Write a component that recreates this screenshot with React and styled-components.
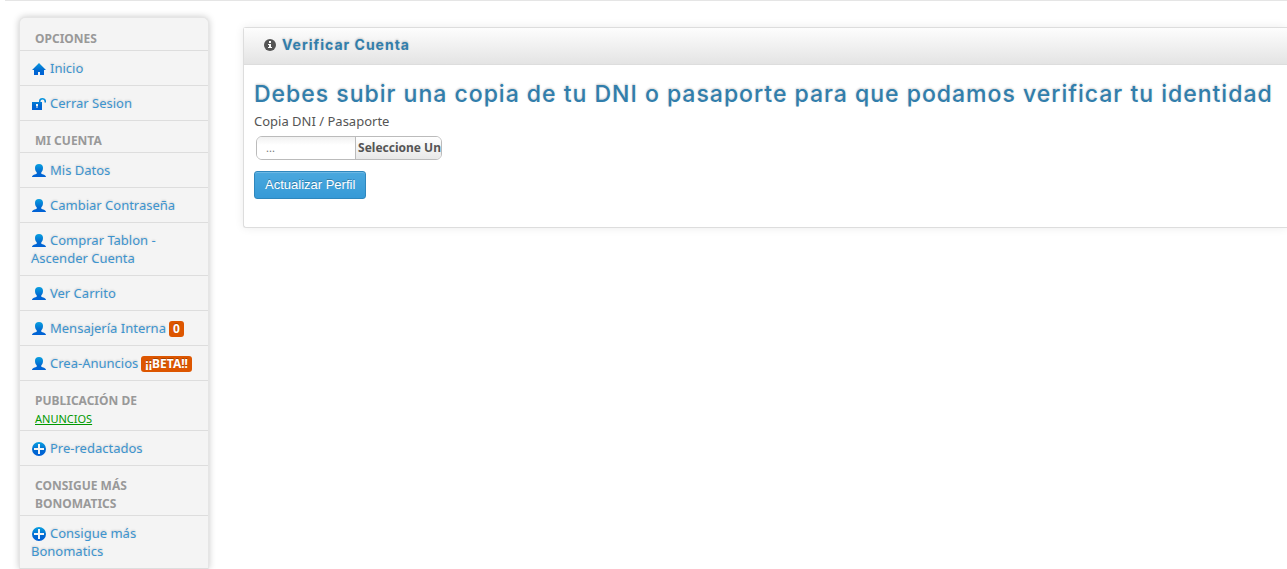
import React from "react";
import styled, { createGlobalStyle } from "styled-components";

const GlobalStyle = createGlobalStyle`
  * {
    box-sizing: border-box;
  }
  body {
    margin: 0;
    background: #fff;
    color: #555;
    font: 13px/18px "Noto Sans", "Open Sans", sans-serif;
  }
`;

const Page = styled.div`
  display: flex;
  flex-direction: column;
  min-height: 100vh;
`;

const TopBar = styled.header`
  height: 1px;
  margin-left: 5px;
  background: #e5e5e5;
`;

const Layout = styled.div`
  flex: 1;
  display: flex;
  align-items: stretch;
  gap: 34px;
  padding-left: 19px;
`;

const Sidebar = styled.nav`
  flex: 0 0 190px;
  margin-top: 16px;
  padding-top: 1px;
  background: #f4f4f4;
  border: 1px solid #e5e5e5;
  border-bottom: 0;
  border-radius: 6px 6px 0 0;
  box-shadow: 0 0 7px rgba(0, 0, 0, 0.22);
`;

const Menu = styled.ul`
  list-style: none;
  margin: 0;
  padding: 0;
`;

const MenuHeader = styled.li`
  padding: 11px 48px 2px 15px;
  border-bottom: 1px solid #ddd;
  color: #999;
  font-size: 12px;
  font-weight: 700;
  text-transform: uppercase;
`;

const AdLink = styled.a`
  display: block;
  color: #009900;
  font-size: 11px;
  font-weight: 400;
  text-decoration: underline;
`;

const MenuItem = styled.li`
  border-bottom: 1px solid #ddd;
`;

const MenuLink = styled.a`
  display: block;
  padding: 8px 11px;
  padding-right: ${(props) => (props.$narrow ? "50px" : "11px")};
  color: #3d94cf;
  text-decoration: none;
  text-shadow: 0 -1px 2px rgba(0, 0, 0, 0.15);
  &:hover {
    color: #005580;
  }
`;

const Icon = styled.svg`
  width: 14px;
  height: 14px;
  margin: 0 4px 0 1px;
  vertical-align: -3px;
`;

const Badge = styled.span`
  display: inline-block;
  margin: 1px 0 -1px 3px;
  padding: 0 4px;
  border-radius: 3px;
  background: #dd5600;
  color: #fff;
  font-size: 12px;
  font-weight: 700;
  line-height: 16px;
  text-shadow: 0 -1px 0 rgba(0, 0, 0, 0.25);
`;

const Content = styled.main`
  flex: 1;
  min-width: 0;
  padding-top: 26px;
`;

const Panel = styled.section`
  border: 1px solid #ddd;
  border-right: 0;
  border-radius: 3px 0 0 3px;
  box-shadow: 0 0 10px rgba(0, 0, 0, 0.08);
`;

const PanelHeader = styled.div`
  display: flex;
  align-items: center;
  gap: 6px;
  height: 37px;
  padding: 0 20px 2px;
  border-bottom: 1px solid #ddd;
  background: linear-gradient(to bottom, #fdfdfd, #e4e4e4);
`;

const InfoIcon = styled.svg`
  width: 12px;
  height: 12px;
`;

const PanelTitle = styled.h2`
  margin: 0;
  color: #317eac;
  font: 700 14px/18px Inter, "Liberation Sans", sans-serif;
  letter-spacing: 1px;
  text-shadow: 0 -1px 2px rgba(0, 0, 0, 0.2);
`;

const PanelBody = styled.form`
  padding: 11px 0 28px 10px;
`;

const Heading = styled.h3`
  margin: 0;
  color: #317eac;
  font: 500 23px/36px Inter, "Liberation Sans", sans-serif;
  letter-spacing: 1px;
  text-shadow: 0 -1px 2px rgba(0, 0, 0, 0.2);
`;

const Label = styled.label`
  display: block;
`;

const Uploader = styled.div`
  display: flex;
  width: 186px;
  height: 24px;
  margin: 6px 2px 11px;
  border: 1px solid #bbb;
  border-radius: 6px;
  background: #fff;
`;

const FileName = styled.input`
  flex: 1;
  min-width: 0;
  padding: 0 9px;
  border: 0;
  border-radius: 5px 0 0 5px;
  background: linear-gradient(to bottom, #f1f1f1, #fff 8px);
  color: #777;
  font: 11px/22px "Noto Sans", "Open Sans", sans-serif;
  outline: 0;
`;

const PickButton = styled.button`
  flex: 0 0 83px;
  padding: 0 0 0 2px;
  border: 0;
  border-left: 1px solid #bbb;
  border-radius: 0 5px 5px 0;
  background: linear-gradient(to bottom, #fff, #e8e8e8);
  color: #555;
  font: 700 12px/22px "Noto Sans", "Open Sans", sans-serif;
  text-align: left;
  white-space: nowrap;
  cursor: pointer;
`;

const SubmitButton = styled.button`
  height: 28px;
  padding: 0 10px;
  border: 1px solid #2f87bd;
  border-radius: 3px;
  background: linear-gradient(to bottom, #4aa8de, #369ad7);
  box-shadow: inset 0 1px 0 rgba(255, 255, 255, 0.2);
  color: #fff;
  font: 13px/18px "Liberation Sans", Arial, sans-serif;
  text-shadow: 0 -1px 0 rgba(0, 0, 0, 0.25);
  cursor: pointer;
`;

const shapes = {
  home: <path d="M7 1 0 8h2v5h4v-3h2v3h4V8h2z" />,
  unlock: (
    <path
      fillRule="evenodd"
      d="M0 5h7V4c0-2 1.300-3 3.300-3S14 2 14 4v1.500h-1.500V4.500C12.500 3.200 11.600 2.500 10.500 2.500S8.500 3.200 8.500 4.500V5H10v8H0zM4 7v2h.5v2h1V9H6V7z"
    />
  ),
  user: (
    <path d="M7 0C4.300 0 3 1.500 3 3.700c0 2 .6 3.500 1.700 4.500v1.500C3.500 10.500 0 10.600 0 13h14c0-2.400-3.500-2.500-4.700-3.300V8.200C10.400 7.200 11 5.700 11 3.700 11 1.500 9.700 0 7 0z" />
  ),
  plus: (
    <path
      fillRule="evenodd"
      d="M7 0a7 7 0 1 0 0 14A7 7 0 0 0 7 0zM6 2h2v4h4v2H8v4H6V8H2V6h4z"
    />
  ),
};

const MenuIcon = ({ name }) => {
  const id = React.useId();
  return (
    <Icon viewBox="0 0 14 14" aria-hidden="true">
      <linearGradient id={id} x1="0" y1="0" x2="0" y2="14" gradientUnits="userSpaceOnUse">
        <stop offset="0" stopColor="#0aa0e0" />
        <stop offset="0.6" stopColor="#0068d0" />
        <stop offset="1" stopColor="#0060d8" />
      </linearGradient>
      <g fill={`url(#${id})`}>{shapes[name]}</g>
    </Icon>
  );
};

const groups = [
  {
    title: "Opciones",
    items: [
      { icon: "home", text: "Inicio" },
      { icon: "unlock", text: "Cerrar Sesion" },
    ],
  },
  {
    title: "Mi cuenta",
    items: [
      { icon: "user", text: "Mis Datos" },
      { icon: "user", text: "Cambiar Contraseña" },
      { icon: "user", text: "Comprar Tablon - Ascender Cuenta", narrow: true },
      { icon: "user", text: "Ver Carrito" },
      { icon: "user", text: "Mensajería Interna", badge: "0" },
      { icon: "user", text: "Crea-Anuncios", badge: "¡¡BETA!!" },
    ],
  },
  {
    title: "Publicación de",
    link: "Anuncios",
    items: [{ icon: "plus", text: "Pre-redactados" }],
  },
  {
    title: "Consigue más Bonomatics",
    items: [{ icon: "plus", text: "Consigue más Bonomatics", narrow: true }],
  },
];

const App = () => {
  return (
    <React.Fragment>
      <GlobalStyle />
      <Page>
        <TopBar />
        <Layout>
          <Sidebar>
            <Menu>
              {groups.map((group) => (
                <React.Fragment key={group.title}>
                  <MenuHeader>
                    {group.title}
                    {group.link && <AdLink href="#">{group.link}</AdLink>}
                  </MenuHeader>
                  {group.items.map((item) => (
                    <MenuItem key={item.text}>
                      <MenuLink href="#" $narrow={item.narrow}>
                        <MenuIcon name={item.icon} />
                        {item.text}
                        {item.badge && <Badge>{item.badge}</Badge>}
                      </MenuLink>
                    </MenuItem>
                  ))}
                </React.Fragment>
              ))}
            </Menu>
          </Sidebar>
          <Content>
            <Panel>
              <PanelHeader>
                <InfoIcon viewBox="0 0 12 12" aria-hidden="true">
                  <circle cx="6" cy="6" r="6" fill="#555" />
                  <path fill="#fff" d="M5 2h2v2H5zM4 5h3v3h1v1H4V8h1V6H4z" />
                </InfoIcon>
                <PanelTitle>Verificar Cuenta</PanelTitle>
              </PanelHeader>
              <PanelBody onSubmit={(e) => e.preventDefault()}>
                <Heading>
                  Debes subir una copia de tu DNI o pasaporte para que podamos verificar tu identidad
                </Heading>
                <Label htmlFor="dni">Copia DNI / Pasaporte</Label>
                <Uploader>
                  <FileName id="dni" type="text" value="..." readOnly />
                  <PickButton type="button">Seleccione Un</PickButton>
                </Uploader>
                <SubmitButton type="submit">Actualizar Perfil</SubmitButton>
              </PanelBody>
            </Panel>
          </Content>
        </Layout>
      </Page>
    </React.Fragment>
  );
};

export default App;
